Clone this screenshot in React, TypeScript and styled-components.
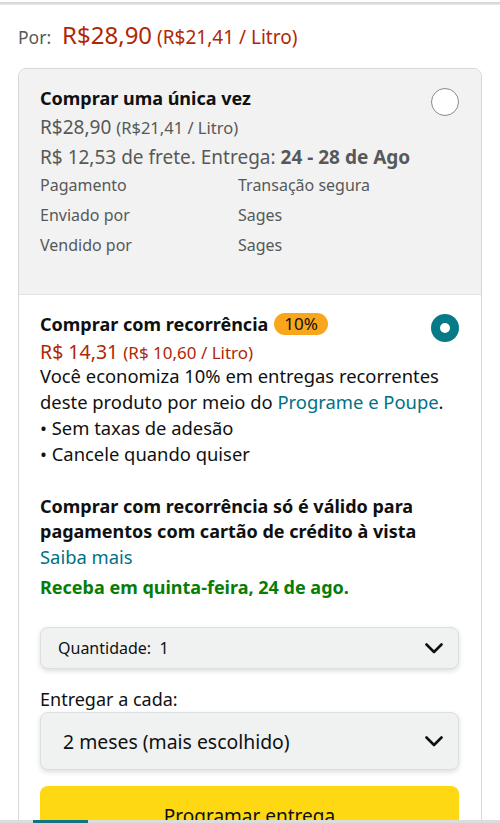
import * as React from "react";
import styled, { createGlobalStyle } from "styled-components";

const GlobalStyle = createGlobalStyle`
	html, body {
		margin: 0;
		padding: 0;
		background: #fff;
	}
	body {
		font-family: "Noto Sans", "Open Sans", Arial, sans-serif;
		color: #0f1111;
		-webkit-font-smoothing: antialiased;
	}
`;

const Page = styled.div`
	width: 500px;
	height: 823px;
	overflow: hidden;
`;

const TopEdge = styled.div`
	height: 3px;
	margin-top: 2px;
	background: linear-gradient(#d2d2d2, #e9e9e9);
`;

const PriceLine = styled.div`
	display: flex;
	align-items: baseline;
	gap: 11px;
	height: 30px;
	padding: 17px 18px 0;
	line-height: 30px;
`;

const Label = styled.span`
	font-size: 17.5px;
	color: #565959;
`;

const Price = styled.span<{ $size?: number; $color?: string }>`
	font-size: ${(p) => p.$size ?? 19}px;
	line-height: 1;
	color: ${(p) => p.$color ?? "#b12704"};
`;

const Unit = styled.span<{ $size?: number; $color?: string }>`
	font-size: ${(p) => p.$size ?? 16.5}px;
	line-height: 1;
	color: ${(p) => p.$color ?? "#b12704"};
	margin-left: 5px;
`;

const Card = styled.div`
	margin: 16px 18px 0;
	border: 1px solid #d5d9d9;
	border-radius: 8px;
	overflow: hidden;
`;

const Option = styled.div<{ $selected?: boolean }>`
	padding: ${(p) => (p.$selected ? "16px 22px 30px 21px" : "16px 22px 34px 21px")};
	background: ${(p) => (p.$selected ? "#fff" : "#f2f2f2")};
	& + & {
		border-top: 1px solid #e3e3e3;
	}
`;

const Header = styled.div`
	display: flex;
	align-items: flex-start;
	justify-content: space-between;
`;

const Title = styled.div`
	display: flex;
	align-items: center;
	gap: 6px;
	font-size: 18px;
	font-weight: 700;
	line-height: 26px;
	color: #0f1111;
`;

const Badge = styled.span`
	display: inline-flex;
	align-items: center;
	height: 22px;
	padding: 0 10px;
	border-radius: 11px;
	background: #f9a61d;
	font-size: 17px;
	font-weight: 400;
	color: #0f1111;
`;

const Line = styled.div<{ $size?: number; $lh?: number; $color?: string; $bold?: boolean; $mt?: number }>`
	font-size: ${(p) => p.$size ?? 18}px;
	line-height: ${(p) => p.$lh ?? 26}px;
	color: ${(p) => p.$color ?? "#0f1111"};
	font-weight: ${(p) => (p.$bold ? 700 : 400)};
	margin-top: ${(p) => p.$mt ?? 0}px;
`;

const Strong = styled.b`
	font-weight: 700;
`;

const DetailGrid = styled.div`
	display: grid;
	grid-template-columns: 198px 1fr;
	font-size: 16px;
	line-height: 30px;
	color: #565959;
`;

const Radio = styled.span<{ $checked?: boolean }>`
	flex: none;
	width: 28px;
	height: 28px;
	box-sizing: border-box;
	border-radius: 50%;
	margin-top: 3px;
	background: #fff;
	border: ${(p) => (p.$checked ? "9px solid #077a87" : "1.5px solid #8a8a8a")};
`;

const Link = styled.span`
	color: #007185;
`;

const Select = styled.div<{ $tall?: boolean }>`
	display: flex;
	align-items: center;
	justify-content: space-between;
	box-sizing: border-box;
	height: ${(p) => (p.$tall ? 58 : 42)}px;
	padding: 0 15px 0 ${(p) => (p.$tall ? 22 : 17)}px;
	background: #f0f2f2;
	border: 1px solid #dcdfdf;
	border-radius: 8px;
	box-shadow: 0 2px 5px rgba(15, 17, 17, 0.15);
	font-size: ${(p) => (p.$tall ? 19.4 : 16)}px;
	color: #0f1111;
`;

const Controls = styled.div`
	margin-top: 27px;
`;

const FieldLabel = styled.div`
	font-size: 18px;
	line-height: 26px;
	margin-top: 17px;
	color: #0f1111;
`;

const PrimaryButton = styled.div`
	margin-top: 16px;
	height: 56px;
	display: flex;
	align-items: flex-start;
	justify-content: center;
	box-sizing: border-box;
	padding-top: 18px;
	background: #ffd814;
	border-radius: 8px;
	font-size: 19px;
	line-height: 24px;
	color: #0f1111;
`;

const BottomBar = styled.div`
	position: fixed;
	left: 0;
	right: 0;
	bottom: 0;
	height: 3px;
	background: #dcdcdc;
`;

const BottomTab = styled.div`
	margin-left: 33px;
	width: 55px;
	height: 3px;
	background: #0d7480;
`;

function Chevron() {
	return (
		<svg width="18" height="11" viewBox="0 0 18 11" fill="none">
			<path d="M1.5 1.5 9 9l7.5-7.5" stroke="#0f1111" strokeWidth="2.6" strokeLinecap="round" strokeLinejoin="round" />
		</svg>
	);
}

export default function App() {
	return (
		<Page>
			<GlobalStyle />
			<TopEdge />
			<PriceLine>
				<Label>Por:</Label>
				<span>
					<Price $size={24}>R$28,90</Price>
					<Unit $size={19}>(R$21,41 / Litro)</Unit>
				</span>
			</PriceLine>

			<Card>
				<Option>
					<Header>
						<Title>Comprar uma única vez</Title>
						<Radio />
					</Header>
					<Line $lh={22}>
						<Price $color="#565959">R$28,90</Price>
						<Unit $color="#565959">(R$21,41 / Litro)</Unit>
					</Line>
					<Line $size={19} $color="#565959" $mt={6}>
						R$ 12,53 de frete. Entrega: <Strong>24 - 28 de Ago</Strong>
					</Line>
					<DetailGrid>
						<span>Pagamento</span>
						<span>Transação segura</span>
						<span>Enviado por</span>
						<span>Sages</span>
						<span>Vendido por</span>
						<span>Sages</span>
					</DetailGrid>
				</Option>

				<Option $selected>
					<Header>
						<Title>
							Comprar com recorrência <Badge>10%</Badge>
						</Title>
						<Radio $checked />
					</Header>
					<Line $lh={21}>
						<Price $size={19.5}>R$ 14,31</Price>
						<Unit $size={17}>(R$ 10,60 / Litro)</Unit>
					</Line>
					<Line $size={18.4} $lh={26}>
						Você economiza 10% em entregas recorrentes deste produto por meio do{" "}
						<Link>Programe e Poupe</Link>.
					</Line>
					<Line $size={18.4} $lh={26}>• Sem taxas de adesão</Line>
					<Line $size={18.4} $lh={26}>• Cancele quando quiser</Line>

					<Line $bold $lh={25} $mt={27}>
						Comprar com recorrência só é válido para pagamentos com cartão de crédito à vista
					</Line>
					<Line $size={18.4} $lh={25} $color="#007185">Saiba mais</Line>
					<Line $bold $lh={25} $color="#067d06" $mt={6}>
						Receba em quinta-feira, 24 de ago.
					</Line>

					<Controls>
						<Select>
							<span>Quantidade:&nbsp; 1</span>
							<Chevron />
						</Select>
						<FieldLabel>Entregar a cada:</FieldLabel>
						<Select $tall>
							<span>2 meses (mais escolhido)</span>
							<Chevron />
						</Select>
						<PrimaryButton>Programar entrega</PrimaryButton>
					</Controls>
				</Option>
			</Card>

			<BottomBar>
				<BottomTab />
			</BottomBar>
		</Page>
	);
}
